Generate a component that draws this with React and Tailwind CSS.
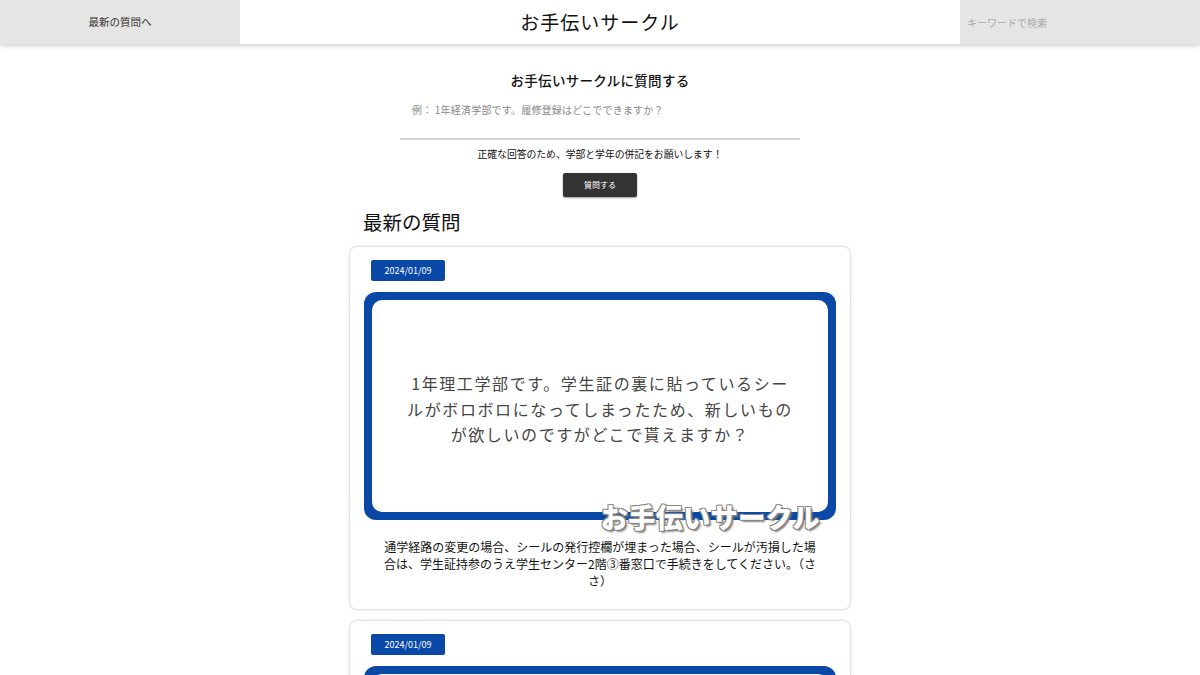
import { useState } from "react";

const font = { fontFamily: '"Noto Sans CJK JP", "Noto Sans", sans-serif' };

const posts = [
  {
    date: "2024/01/09",
    question:
      "1年理工学部です。学生証の裏に貼っているシールがボロボロになってしまったため、新しいものが欲しいのですがどこで貰えますか？",
    answer:
      "通学経路の変更の場合、シールの発行控欄が埋まった場合、シールが汚損した場合は、学生証持参のうえ学生センター2階③番窓口で手続きをしてください。（ささ）",
  },
  {
    date: "2024/01/09",
    question: "2年文学部です。図書館の開館時間を教えてください。",
    answer: "",
  },
];

function Header() {
  return (
    <header className="relative z-10 flex h-[44px] w-full shadow-[0_2px_4px_rgba(0,0,0,0.18)]">
      <a className="flex w-[240px] items-center justify-center bg-[#e5e5e5] text-[10.5px] text-[#333]">
        最新の質問へ
      </a>
      <h1 className="flex flex-1 items-center justify-center bg-white text-[19px] tracking-[1px] text-[#111]">
        お手伝いサークル
      </h1>
      <div className="flex w-[240px] items-center bg-[#e5e5e5] pl-[7px]">
        <input
          className="w-full bg-transparent text-[10px] text-[#999] outline-none placeholder:text-[#aaa]"
          placeholder="キーワードで検索"
        />
      </div>
    </header>
  );
}

function AskForm() {
  const [text, setText] = useState("");
  return (
    <section className="flex flex-col items-center pt-[26px]">
      <h2 className="text-[13.5px] font-medium tracking-[0.3px] text-[#111]">
        お手伝いサークルに質問する
      </h2>
      <textarea
        value={text}
        onChange={(e) => setText(e.target.value)}
        placeholder="例： 1年経済学部です。履修登録はどこでできますか？"
        className="mt-[8px] h-[42px] w-[400px] resize-none border-b-2 border-[#d4d4d4] px-[12px] py-[4px] text-[10px] tracking-[0.2px] text-[#333] outline-none placeholder:text-[#888]"
      />
      <p className="mt-[7px] text-[9.8px] text-[#111]">
        正確な回答のため、学部と学年の併記をお願いします！
      </p>
      <button className="mt-[11px] h-[24px] w-[74px] rounded-[2px] bg-[#333] text-[8px] text-white shadow-[0_1px_2px_rgba(0,0,0,0.4)]">
        質問する
      </button>
    </section>
  );
}

function PostCard({ post }) {
  return (
    <article className="w-[500px] rounded-[7px] bg-white px-[14px] pt-[13px] pb-[20px] shadow-[0_0_3px_rgba(0,0,0,0.3)]">
      <div className="ml-[7px] flex h-[21px] w-[74px] items-center justify-center rounded-[2px] bg-[#0a48a8] text-[9px] text-white">
        {post.date}
      </div>
      <div className="relative mt-[11px] rounded-[12px] bg-[#0a48a8] p-[8px]">
        <div className="flex h-[212px] items-start justify-center rounded-[10px] bg-white px-[33px] pt-[71px]">
          <p className="text-center text-[16px] leading-[25.5px] tracking-[1.6px] text-[#444]">
            {post.question}
          </p>
        </div>
        <span
          className="absolute right-[16px] bottom-[-10px] text-[27px] font-black leading-none tracking-[0.5px] text-white"
          style={{
            textShadow:
              "1px 1px 0 #888, -1px 1px 0 #888, 1px -1px 0 #888, -1px -1px 0 #888, 2px 2px 2px #777",
          }}
        >
          お手伝いサークル
        </span>
      </div>
      <p className="mt-[18px] px-[16px] text-center text-[12px] leading-[17px] text-[#111]">
        {post.answer}
      </p>
    </article>
  );
}

export default function App() {
  return (
    <div className="min-h-screen bg-white" style={font}>
      <Header />
      <AskForm />
      <main className="mx-auto flex w-[500px] flex-col pt-[10px] pb-[40px]">
        <h2 className="ml-[13px] text-[19.5px] text-[#111]">最新の質問</h2>
        <div className="mt-[11px] flex flex-col gap-[12px]">
          {posts.map((p, i) => (
            <PostCard key={i} post={p} />
          ))}
        </div>
      </main>
    </div>
  );
}
